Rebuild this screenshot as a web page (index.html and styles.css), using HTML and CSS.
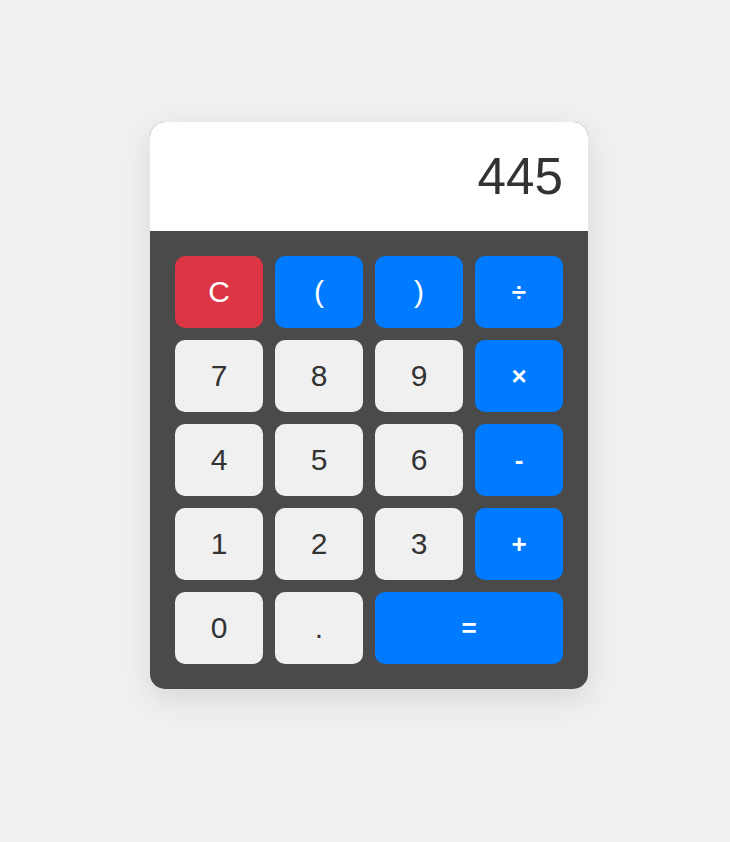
FILE: index.html
```html
<!DOCTYPE html>
<html lang="en">
<head>
<meta charset="utf-8">
<title>Calculator</title>
<link rel="stylesheet" href="styles.css">
</head>
<body>
<div class="calculator">
  <div class="display">445</div>
  <div class="keys">
    <button class="key clear">C</button>
    <button class="key op">(</button>
    <button class="key op">)</button>
    <button class="key op bold">÷</button>
    <button class="key">7</button>
    <button class="key">8</button>
    <button class="key">9</button>
    <button class="key op bold">×</button>
    <button class="key">4</button>
    <button class="key">5</button>
    <button class="key">6</button>
    <button class="key op bold">-</button>
    <button class="key">1</button>
    <button class="key">2</button>
    <button class="key">3</button>
    <button class="key op bold">+</button>
    <button class="key">0</button>
    <button class="key">.</button>
    <button class="key op bold equals">=</button>
  </div>
</div>
</body>
</html>
```
FILE: styles.css
```css
html, body {
  margin: 0;
  background: #f0f0f0;
}
body {
  padding: 122px 0 0 150px;
  font-family: "Liberation Sans", Arial, sans-serif;
  height: 842px;
  box-sizing: border-box;
}
.calculator {
  width: 438px;
  border-radius: 15px;
  overflow: hidden;
  background: #4a4a4a;
  box-shadow: 0 10px 30px rgba(0, 0, 0, 0.1);
}
.display {
  background: #fff;
  color: #333;
  text-align: right;
  font-size: 51.2px;
  line-height: 59px;
  padding: 25px 25px;
  height: 59px;
}
.keys {
  display: grid;
  grid-template-columns: repeat(4, 88px);
  grid-auto-rows: 72px;
  gap: 12px;
  padding: 25px;
}
.key {
  border: none;
  border-radius: 10px;
  background: #f0f0f0;
  color: #333;
  font-family: "Liberation Sans", Arial, sans-serif;
  font-size: 30px;
  padding: 0;
  margin: 0;
}
.op {
  background: #007bff;
  color: #fff;
}
.clear {
  background: #dc3545;
  color: #fff;
}
.bold {
  font-weight: bold;
  font-size: 26px;
}
.equals {
  grid-column: span 2;
}
```
